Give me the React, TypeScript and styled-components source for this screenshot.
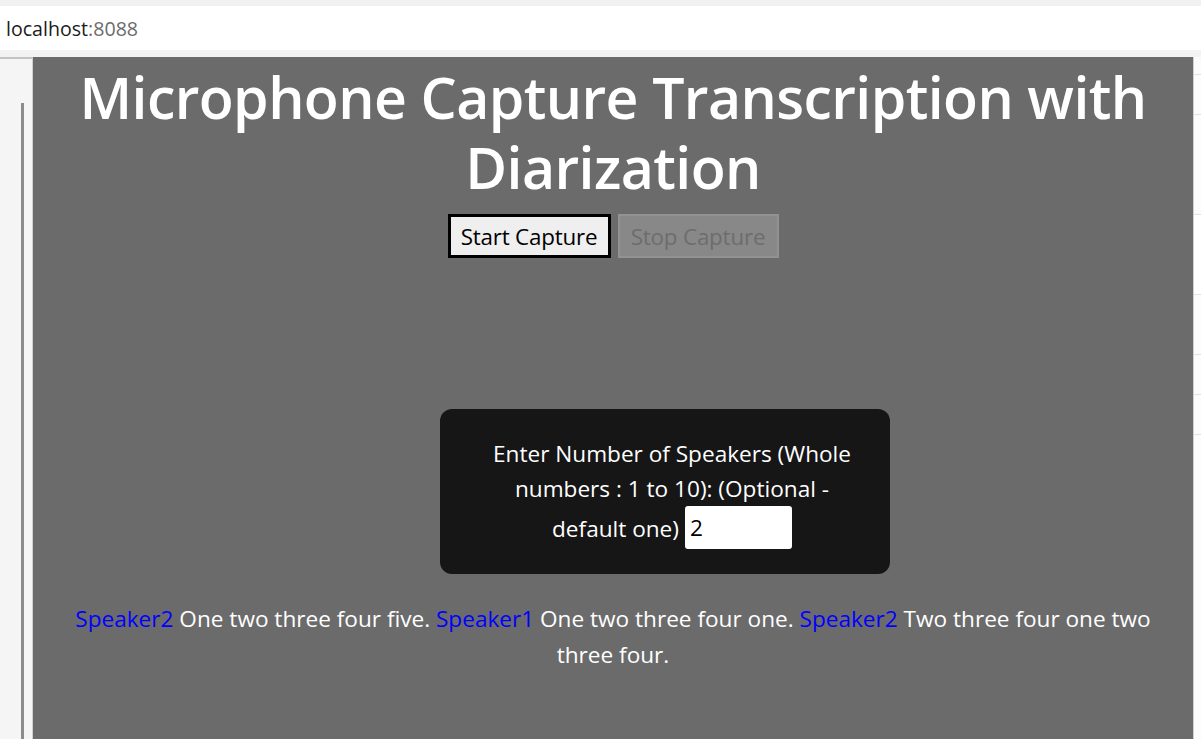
import React from "react";
import styled, { createGlobalStyle } from "styled-components";

const Global = createGlobalStyle`
  html, body { margin: 0; padding: 0; height: 739px; overflow: hidden; background: #f3f3f3; }
  * { box-sizing: border-box; }
  #root { height: 739px; }
`;

const FONT = `"Open Sans", "Noto Sans", "Liberation Sans", sans-serif`;

const Page = styled.div`
  display: flex;
  flex-direction: column;
  height: 739px;
  font-family: ${FONT};
`;

const TopStrip = styled.div`
  height: 6px;
  background: #f1f1f1;
`;

const AddressBar = styled.div`
  height: 44px;
  background: #ffffff;
  display: flex;
  align-items: center;
  padding-left: 6px;
  font-size: 19.6px;
  color: #1b1b1b;
`;

const Port = styled.span`
  color: #6b6b6b;
`;

const BarGap = styled.div`
  height: 7px;
  background: #f3f3f3;
`;

const Body = styled.div`
  flex: 1;
  display: flex;
  min-height: 0;
`;

const LeftRail = styled.div`
  width: 33px;
  background: #f5f5f5;
  border-top: 2px solid #c4c4c4;
  border-right: 1px solid #d0d0d0;
  display: flex;
  padding-top: 44px;
  padding-left: 21px;
`;

const RailBar = styled.div`
  width: 3px;
  background: #8c8c8c;
`;

const Main = styled.main`
  flex: 1;
  background: #6b6b6b;
  color: #ffffff;
  display: flex;
  flex-direction: column;
  align-items: center;
  text-align: center;
  padding: 0 20px;
`;

const Title = styled.h1`
  margin: 5px 0 0;
  font-size: 57.2px;
  font-weight: 600;
  line-height: 70px;
  letter-spacing: -0.6px;
`;

const Buttons = styled.div`
  display: flex;
  gap: 7px;
  margin-top: 12px;
`;

const Button = styled.button<{ $active?: boolean }>`
  font-family: ${FONT};
  font-size: 22.4px;
  height: 44px;
  padding: 0;
  letter-spacing: -0.2px;
  border: ${(p) => (p.$active ? "3px solid #000" : "2px solid #929292")};
  background: ${(p) => (p.$active ? "#efefef" : "#888888")};
  color: ${(p) => (p.$active ? "#000" : "#6d6d6d")};
  width: ${(p) => (p.$active ? "163px" : "161px")};
`;

const SpeakerBox = styled.div<{ $shift: number }>`
  margin-top: 151px;
  margin-left: ${(p) => p.$shift}px;
  width: 450px;
  background: #161616;
  border-radius: 12px;
  padding: 27px 28px 18px 42px;
  font-size: 22.6px;
  line-height: 35px;
`;

const Label = styled.label`
  display: inline;
`;

const NumberInput = styled.input`
  font-family: ${FONT};
  font-size: 22.6px;
  width: 107px;
  height: 43px;
  border: none;
  border-radius: 3px;
  padding: 0 5px;
  margin: 0 0 7px 6px;
  vertical-align: middle;
  color: #000;
  background: #fff;
`;

const Transcript = styled.p`
  margin: 27px 0 0;
  font-size: 22.6px;
  line-height: 36px;
`;

const Speaker = styled.span`
  color: #0000ff;
`;

const Words = styled.span``;

const RightRail = styled.div`
  width: 8px;
  background: #fbfbfb;
  border-left: 1px solid #cfcfcf;
  display: flex;
  flex-direction: column;
`;

const RailLine = styled.div<{ $h: number; $bg?: string }>`
  height: ${(p) => p.$h}px;
  background: ${(p) => p.$bg || "transparent"};
  border-bottom: 1px solid #e2e2e2;
`;

const transcript = [
  { speaker: "Speaker2", words: ["One two three four five."] },
  { speaker: "Speaker1", words: ["One two three four one."] },
  { speaker: "Speaker2", words: ["Two three four one two", "three four."] },
];

export default function App() {
  return (
    <>
      <Global />
      <Page>
        <TopStrip />
        <AddressBar>
          localhost<Port>:8088</Port>
        </AddressBar>
        <BarGap />
        <Body>
          <LeftRail>
            <RailBar />
          </LeftRail>
          <Main>
            <Title>Microphone Capture Transcription with Diarization</Title>
            <Buttons>
              <Button $active>Start Capture</Button>
              <Button disabled>Stop Capture</Button>
            </Buttons>
            <SpeakerBox $shift={104}>
              <Label>
                Enter Number of Speakers (Whole numbers : 1 to 10): (Optional - default one)
              </Label>
              <NumberInput type="number" defaultValue={2} />
            </SpeakerBox>
            <Transcript>
              {transcript.map((seg, i) => (
                <React.Fragment key={i}>
                  {i > 0 && " "}
                  <Speaker>{seg.speaker}</Speaker>
                  {seg.words.map((w, j) => (
                    <React.Fragment key={j}>
                      {" "}
                      <Words>{w}</Words>
                    </React.Fragment>
                  ))}
                </React.Fragment>
              ))}
            </Transcript>
          </Main>
          <RightRail>
            <RailLine $h={18} />
            <RailLine $h={40} />
            <RailLine $h={100} />
            <RailLine $h={80} $bg="#ffffff" />
            <RailLine $h={60} />
            <RailLine $h={40} />
            <RailLine $h={40} />
          </RightRail>
        </Body>
      </Page>
    </>
  );
}
